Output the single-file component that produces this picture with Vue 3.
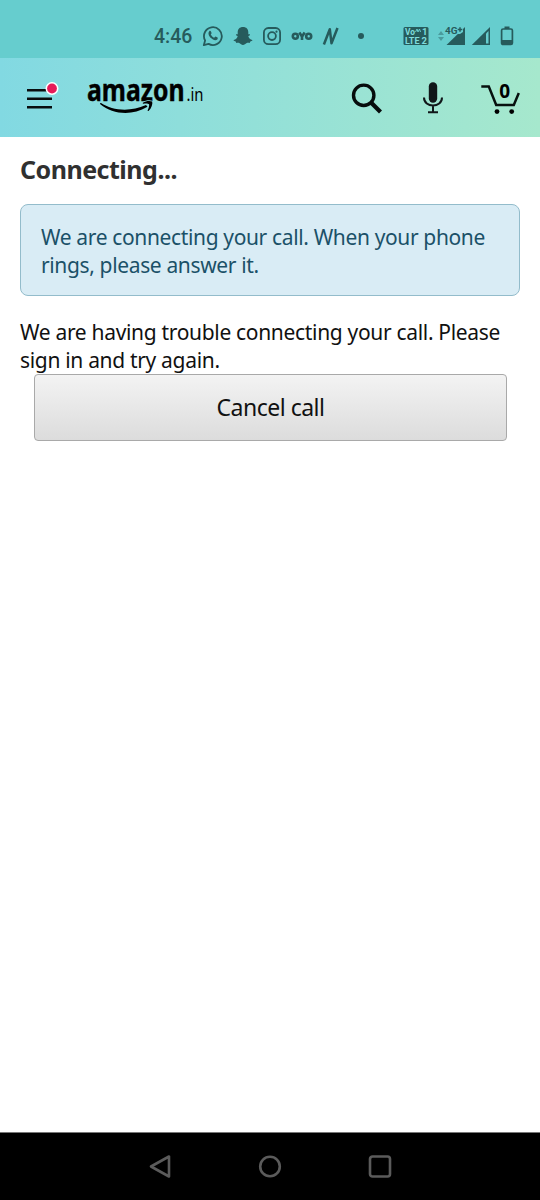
<script setup>
const cartCount = 0
</script>

<template>
  <div class="screen">
    <header class="status">
      <span class="time">4:46</span>
      <div class="notifications">
        <svg width="22" height="24" viewBox="0 0 22 24">
          <path d="M1.8 21.2 3.1 16.4A8.9 8.9 0 1 1 6.6 19.9Z" fill="none" stroke="#265b5c" stroke-width="1.8" stroke-linejoin="round" />
          <path d="M7.3 7.2c.5-.6 1.2-.5 1.5.1l.8 1.8c.2.4-.7 1.1-.8 1.4.8 1.6 1.900 2.500 3.400 3.200.5-.2 1-1.200 1.400-1.100l1.900.9c.5.3.2 1.400-.2 1.900-1.900 1.700-4.600.2-6.300-1.300C7 12.200 5.500 9.300 7.300 7.200Z" fill="#265b5c" />
        </svg>
        <svg width="20" height="24" viewBox="0 0 20 24">
          <path d="M10 3C6.600 3 4.600 5.200 4.700 8.300v1.900c-.6.300-1.300-.2-1.700.3-.4.700 1 1.200 1.700 1.700C4.300 14 2.500 15.600.8 16c-.5.400-.1 1 1.900 1.500l.6 1.400c1 0 2.300-.3 3.300.4 1 .7 1.900 1.700 3.400 1.700s2.400-1 3.400-1.700c1-.7 2.300-.4 3.300-.4l.6-1.400c2-.5 2.400-1.100 1.900-1.500-1.700-.4-3.500-2-3.900-3.800.7-.5 2.100-1 1.700-1.700-.4-.5-1.100 0-1.700-.3V8.300C15.400 5.200 13.400 3 10 3Z" fill="#265b5c" />
        </svg>
        <svg width="20" height="24" viewBox="0 0 20 24">
          <g fill="none" stroke="#265b5c" stroke-width="1.800">
            <rect x="1.900" y="4" width="16.200" height="16.200" rx="4.500" />
            <circle cx="10" cy="12.100" r="3.900" />
          </g>
          <circle cx="14.500" cy="7.700" r="1.100" fill="#265b5c" />
        </svg>
        <svg width="22" height="24" viewBox="0 0 22 24">
          <g fill="none" stroke="#265b5c" stroke-width="2.600">
            <circle cx="4.300" cy="12.200" r="2.500" />
            <path d="m8.300 8.600 2.700 4 2.700-4M11 12v4" />
            <circle cx="17.700" cy="12.200" r="2.500" />
          </g>
        </svg>
        <svg width="18" height="24" viewBox="0 0 18 24">
          <path d="M1.900 20.500 7.800 5.200 9.500 19.300 15.500 4" fill="none" stroke="#265b5c" stroke-width="2.500" stroke-linejoin="round" />
        </svg>
        <svg class="more" width="8" height="24" viewBox="0 0 8 24"><circle cx="4" cy="12" r="3" fill="#265b5c" /></svg>
      </div>
      <div class="system">
        <svg width="26" height="24" viewBox="0 0 26 24">
          <rect x=".5" y="3" width="25" height="18" rx="1.500" fill="#265b5c" />
          <g class="badge-text" fill="#7fdcdd">
            <text x="2" y="11.400" font-size="9.500" textLength="10" lengthAdjust="spacingAndGlyphs">Vo</text>
            <text x="19" y="11.400" font-size="9.500">1</text>
            <text x="2" y="20" font-size="9.500" textLength="14.500" lengthAdjust="spacingAndGlyphs">LTE</text>
            <text x="18.500" y="20" font-size="9.500">2</text>
          </g>
          <path d="m12.500 8 1.500-3 1 3 1.500-3 1 3" fill="none" stroke="#66cdce" />
        </svg>
        <svg class="signal-one" width="30" height="24" viewBox="0 0 30 24">
          <path d="m1 11 3-4 3 4ZM1 13l3 4 3-4Z" fill="#4a9b9d" />
          <path d="M28 3v18H9.500L28 3Z" fill="#265b5c" />
          <path d="M20 2h6v6l-3 2h-3Z" fill="#66cdce" />
          <text class="badge-text" x="8" y="9.800" font-size="9.500" textLength="12.500" lengthAdjust="spacingAndGlyphs" fill="#265b5c">4G</text>
          <path d="M20.700 5.500h4.600M23 3.200v4.600" stroke="#265b5c" stroke-width="1.500" />
        </svg>
        <svg class="signal-two" width="20" height="24" viewBox="0 0 20 24">
          <path d="M19 3v18H.800Z" fill="#265b5c" />
          <path d="M15 9.500 17.500 7v12.500H15Z" fill="#66cdce" />
        </svg>
        <svg class="battery" width="14" height="24" viewBox="0 0 14 24">
          <path d="M4.500 2.500h5V5h-5Z" fill="#265b5c" />
          <rect x="1.600" y="5" width="10.800" height="15.500" rx="1.500" fill="none" stroke="#265b5c" stroke-width="1.700" />
          <path d="M2 16h10v4H2Z" fill="#265b5c" />
        </svg>
      </div>
    </header>

    <nav class="bar">
      <svg class="menu" width="34" height="34" viewBox="0 0 34 34">
        <path d="M1 9.200h25M1 17.700h25M1 26.200h25" stroke="#080d0f" stroke-width="2.400" />
        <circle cx="26" cy="7.500" r="6.500" fill="#fff" />
        <circle cx="26" cy="7.500" r="4.900" fill="#e61b59" />
      </svg>
      <svg class="logo" width="120" height="58" viewBox="0 -9 120 58">
        <text class="wordmark" x="1" y="22.800" font-size="29.500" textLength="97.500" lengthAdjust="spacingAndGlyphs">amazon</text>
        <text class="suffix" x="100.500" y="22.800" font-size="18.500" textLength="17" lengthAdjust="spacingAndGlyphs">.in</text>
        <path d="M15 25c11.500 7.600 29 9.200 45 2l1.500 1.800C45 38.500 26.500 36 14.300 26.200c-.5-.8 0-1.400.7-1.200Z" />
        <path d="M57 24.800c2.500-2 7-2.200 9.200-1.300.6 2.500-.5 6.600-3.700 9.500-.7.300-1.100 0-.8-.7.900-2 1.700-4.300 1.400-6-.9-1-3.600-.9-5.600-.6-.8.100-1.200-.4-.5-.9Z" stroke="#8cdcdc" stroke-width="1.400" paint-order="stroke" />
      </svg>
      <svg class="search" width="32" height="34" viewBox="0 0 32 34">
        <circle cx="12.700" cy="14.300" r="10.200" fill="none" stroke="#060c0c" stroke-width="3.400" />
        <path d="m20 21.500 9.500 9.500" stroke="#060c0c" stroke-width="4.300" />
      </svg>
      <svg class="mic" width="22" height="34" viewBox="0 0 22 34">
        <rect x="6.800" y="1.200" width="8.400" height="20.500" rx="4.200" fill="#101719" />
        <path d="M2 16.500c0 10.700 18 10.700 18 0M11 25v6M6 31.200h10" fill="none" stroke="#101719" stroke-width="2" />
      </svg>
      <svg class="cart" width="42" height="48" viewBox="0 -6 42 48">
        <path d="M1.300 6.500h7.500l7.400 18.500h17.600l5-12" fill="none" stroke="#07100e" stroke-width="2.500" />
        <circle cx="17" cy="31.600" r="2.400" />
        <circle cx="31.700" cy="31.600" r="2.400" />
        <text class="count" x="24.700" y="18.400" text-anchor="middle" font-size="19">{{ cartCount }}</text>
      </svg>
    </nav>

    <main class="content">
      <h1>Connecting...</h1>
      <div class="notice">We are connecting your call. When your phone<br />rings, please answer it.</div>
      <p class="message">We are having trouble connecting your call. Please<br />sign in and try again.</p>
      <button class="cancel" type="button">Cancel call</button>
    </main>

    <footer class="system-nav">
      <svg width="24" height="26" viewBox="0 0 24 26"><path d="M3 12.500 21 2.500v20Z" /></svg>
      <svg width="26" height="26" viewBox="0 0 26 26"><circle cx="13" cy="12.500" r="9.800" /></svg>
      <svg width="24" height="26" viewBox="0 0 24 26"><rect x="2" y="2.500" width="20" height="20" rx="2.500" /></svg>
    </footer>
  </div>
</template>

<style>
body {
  margin: 0;
  background: #fff;
}
</style>

<style scoped>
.screen {
  width: 540px;
  height: 1200px;
  display: flex;
  flex-direction: column;
  font-family: "Noto Sans", sans-serif;
  background: #fff;
  overflow: hidden;
}
svg {
  display: block;
  flex: none;
}
.status {
  height: 58px;
  box-sizing: border-box;
  padding: 14px 26px 0 154px;
  display: flex;
  align-items: center;
  background: #66cdce;
  color: #265b5c;
}
.time {
  width: 48px;
  padding-top: 1px;
  font: 500 19.500px/24px Roboto, sans-serif;
}
.notifications {
  display: flex;
  gap: 9px;
}
.more {
  margin-left: 8px;
}
.system {
  display: flex;
  margin-left: auto;
}
.signal-one {
  margin-left: 8px;
}
.signal-two {
  margin-left: 4px;
}
.battery {
  margin-left: 9px;
}
.badge-text {
  font-family: Roboto, sans-serif;
  font-weight: 700;
}
.bar {
  height: 79px;
  box-sizing: border-box;
  padding: 0 18px 0 26px;
  display: flex;
  align-items: center;
  background: linear-gradient(90deg, #82d9e2, #a6e8cd);
}
.logo {
  margin-left: 26px;
}
.wordmark {
  font-family: "Noto Sans", sans-serif;
  font-weight: 700;
  stroke: #000;
  stroke-width: 0.4;
}
.suffix {
  font-family: "Noto Sans", sans-serif;
}
.search {
  margin-left: auto;
}
.mic {
  margin-left: 39px;
}
.cart {
  margin-left: 36px;
}
.count {
  font-family: "Noto Sans", sans-serif;
  font-weight: 700;
}
.content {
  flex: 1;
  padding: 15px 20px 0;
}
h1 {
  margin: 0;
  font-size: 25px;
  line-height: 34px;
  letter-spacing: -0.5px;
  font-weight: 700;
  color: #303030;
}
.notice {
  height: 92px;
  margin-top: 18px;
  box-sizing: border-box;
  padding: 18px 20px;
  border: 1px solid #93bccb;
  border-radius: 8px;
  background: #d9ecf5;
  color: #1b5168;
  font-size: 21px;
  line-height: 28px;
  letter-spacing: -0.36px;
  white-space: nowrap;
}
.message {
  margin: 22px 0 0;
  color: #111;
  font-size: 21px;
  line-height: 28px;
  letter-spacing: -0.32px;
  white-space: nowrap;
}
.cancel {
  display: block;
  width: 473px;
  height: 67px;
  margin: 0 0 0 14px;
  padding: 0 0 2px;
  border: 1px solid #a9a9a9;
  border-radius: 4px;
  background: linear-gradient(#f3f3f3, #dcdcdc);
  color: #111;
  font: 23px "Noto Sans", sans-serif;
  letter-spacing: -0.5px;
}
.system-nav {
  height: 68px;
  box-sizing: border-box;
  border-top: 1px solid #777;
  display: flex;
  align-items: center;
  justify-content: center;
  gap: 85px;
  background: #000;
}
.system-nav path,
.system-nav circle,
.system-nav rect {
  fill: none;
  stroke: #5b5b5b;
  stroke-width: 2.600;
  stroke-linejoin: round;
}
</style>
